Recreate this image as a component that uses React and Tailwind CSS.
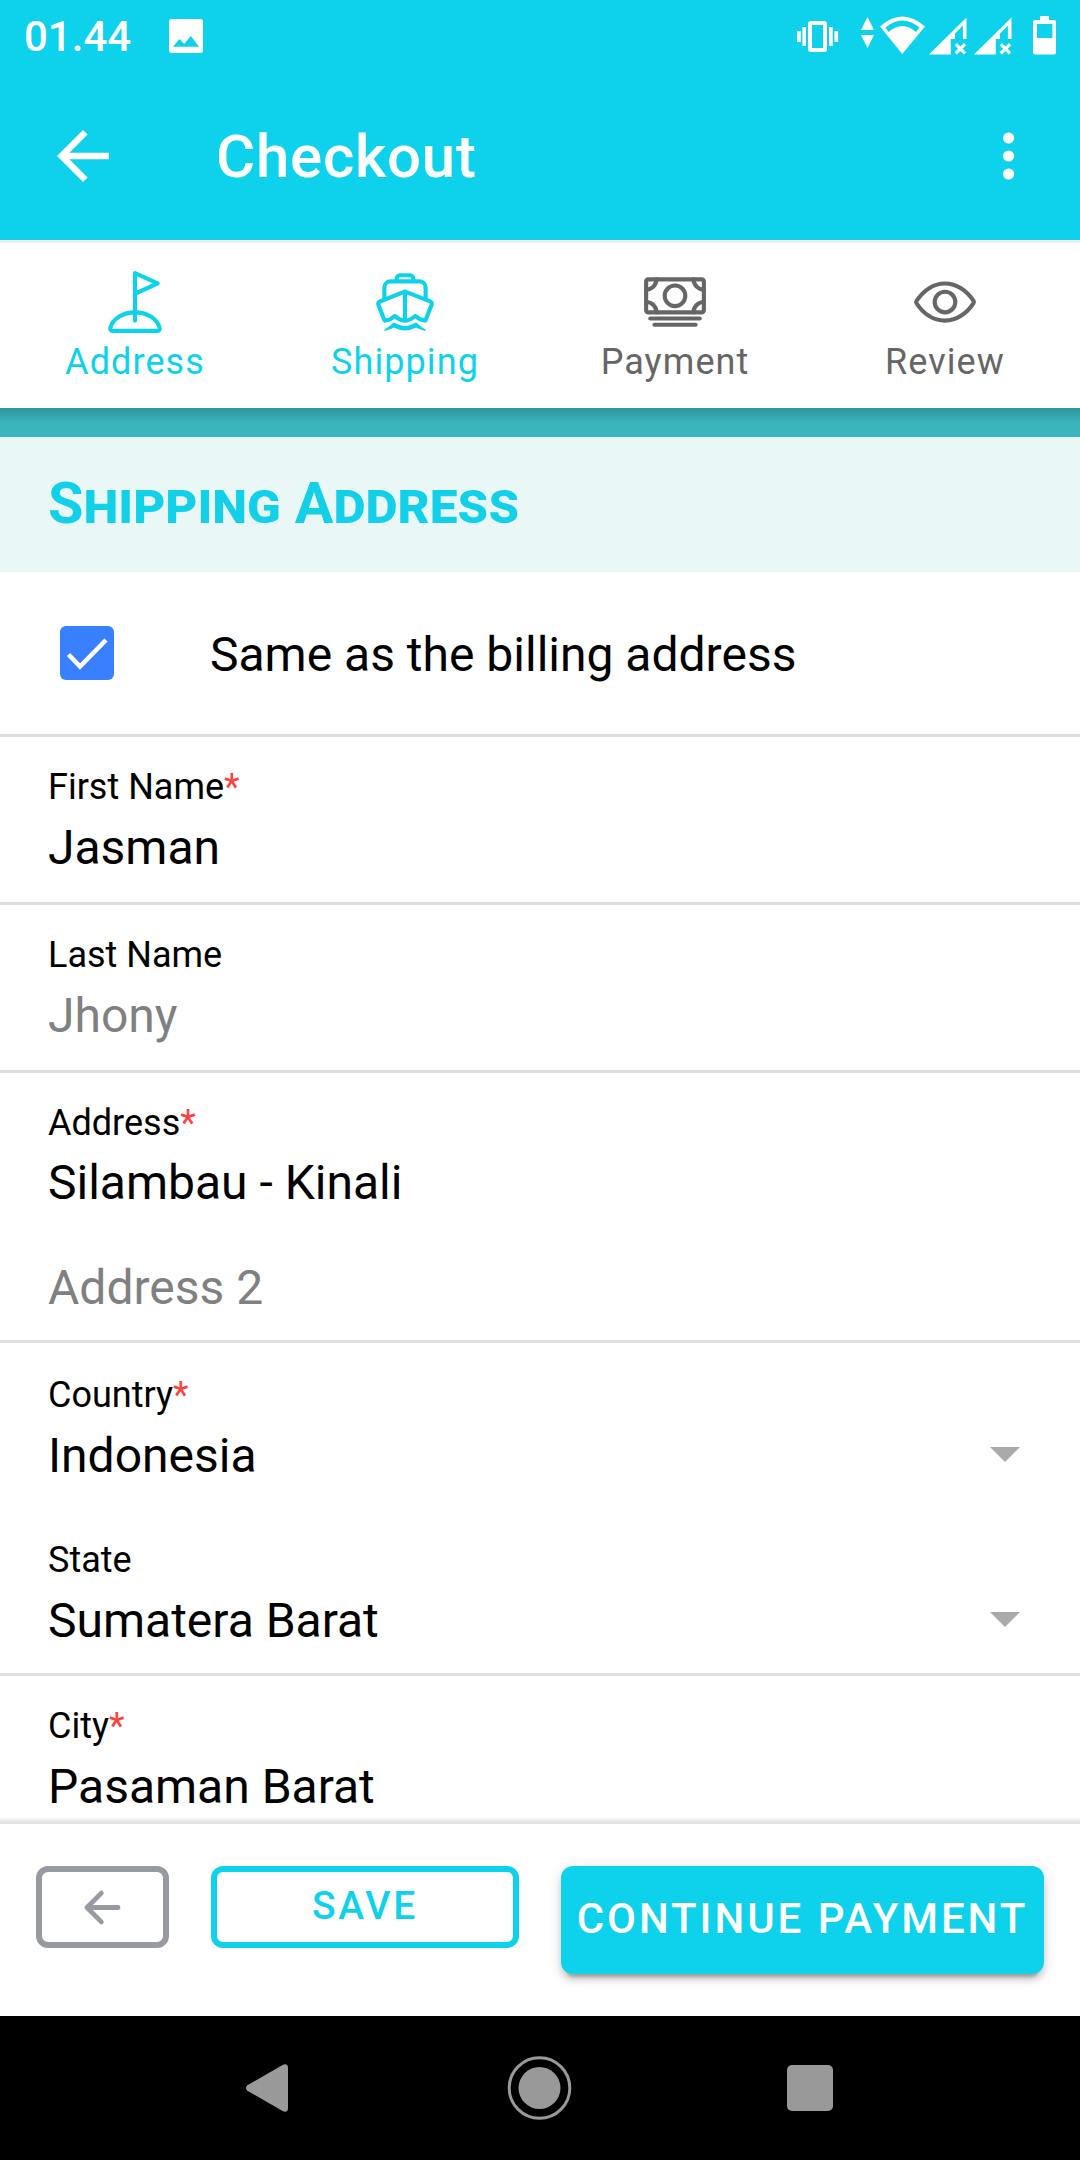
import React from "react";
import { IoGolfOutline, IoBoatOutline, IoCashOutline, IoEyeOutline, IoArrowBackOutline } from "react-icons/io5";
import { MdArrowBack } from "react-icons/md";

function ImageIcon() {
  return (
    <svg className="ml-[38px] h-[34px] w-[34px]" viewBox="169 19 34 34" fill="white">
      <path fillRule="evenodd" d="M172 19H200Q203 19 203 22V50Q203 53 200 53H172Q169 53 169 50V22Q169 19 172 19ZM173 46.8H199L190.8 36L184.2 44L179.4 39Z" />
    </svg>
  );
}

const signal = "M929 54.5L966.5 17.5V54.5ZM962.9 25.5V39H966.5V54.5H950.8V39H955V33.5Z";

function StatusIcons() {
  return (
    <svg className="ml-auto h-[40px] w-[260px]" viewBox="796 16 260 40" fill="white">
      <path d="M797 31h3.8v11H797zM802.4 27h3.6v19h-3.6zM829 27h3.7v19H829zM834.4 31h3.7v11h-3.7z" />
      <rect x="810" y="23" width="15" height="27" rx="1" fill="none" stroke="white" strokeWidth="4" />
      <path d="M867.5 17L874 30H861ZM861 35H874L867.5 48Z" />
      <path fillRule="evenodd" d="M880 26.5Q902.3 6.5 925 26.5L902.3 54ZM885.4 27.5L888.5 32Q902.3 20 916 32L919.5 27.5Q902.3 13.5 885.4 27.5Z" />
      <path fillRule="evenodd" d={signal} />
      <path d="M955.8 44.100l9.200 9.200M965 44.100l-9.200 9.200" stroke="white" strokeWidth="3.200" />
      <g transform="translate(45 0)">
        <path fillRule="evenodd" d={signal} />
        <path d="M955.8 44.100l9.200 9.200M965 44.100l-9.200 9.200" stroke="white" strokeWidth="3.200" />
      </g>
      <path fillRule="evenodd" d="M1040 16h9v4h5q2 0 2 2v30.500q0 2-2 2h-19q-2 0-2-2V22q0-2 2-2h5zM1037 24v14h15.400V24z" />
    </svg>
  );
}

function Tab({ icon: Icon, label, active }) {
  return (
    <div className={"flex flex-1 flex-col items-center pt-[26px] " + (active ? "text-[#0ed2eb]" : "text-[#666666]")}>
      <Icon className="h-[66px] w-[66px]" />
      <span className="mt-[5px] text-[36px] leading-[44px] tracking-[0.03em]">{label}</span>
    </div>
  );
}

function Label({ children, required }) {
  return (
    <div className="text-[36px] leading-[44px]">
      {children}
      {required && <span className="text-[#ff4141]">*</span>}
    </div>
  );
}

function Value({ children, muted }) {
  return <div className={"mt-[11px] text-[48px] leading-[56px] " + (muted ? "text-[#808080]" : "text-black")}>{children}</div>;
}

function Caret() {
  return (
    <svg className="mt-[7px] mr-[60px] h-[15px] w-[30px]" viewBox="0 0 30 15" fill="#aaaaaa">
      <path d="M0 0H30L15 15Z" />
    </svg>
  );
}

function Select({ label, required, children }) {
  return (
    <div>
      <Label required={required}>{label}</Label>
      <div className="flex items-center justify-between">
        <Value>{children}</Value>
        <Caret />
      </div>
    </div>
  );
}

const row = "border-b-[3px] border-[#dedede] pl-[48px]";

export default function App() {
  return (
    <div className="flex h-[2160px] w-[1080px] flex-col overflow-hidden bg-white font-[Roboto,sans-serif] text-black">
      <header className="h-[240px] shrink-0 bg-[#0ed2eb] text-white">
        <div className="flex h-[72px] items-center pr-[24px] pl-[24px]">
          <span className="pt-[2px] text-[42px] leading-[50px] font-medium">01.44</span>
          <ImageIcon />
          <StatusIcons />
        </div>
        <div className="flex h-[168px] items-center pl-[44px]">
          <MdArrowBack className="h-[78px] w-[78px]" />
          <h1 className="ml-[94px] pt-[2px] text-[60px] leading-[72px] font-medium tracking-[0.0125em]">Checkout</h1>
          <svg className="mr-[65px] ml-auto h-[48px] w-[12px]" viewBox="0 0 12 48" fill="white">
            <circle cx="5.600" cy="6" r="5.600" />
            <circle cx="5.600" cy="24" r="5.600" />
            <circle cx="5.600" cy="42" r="5.600" />
          </svg>
        </div>
      </header>

      <nav className="flex h-[168px] shrink-0 border-t-[3px] border-[#ededed] bg-white">
        <Tab icon={IoGolfOutline} label="Address" active />
        <Tab icon={IoBoatOutline} label="Shipping" active />
        <Tab icon={IoCashOutline} label="Payment" />
        <Tab icon={IoEyeOutline} label="Review" />
      </nav>
      <div className="h-[29px] shrink-0 bg-gradient-to-b from-[#2f9599] to-[#39b5bb] to-50%" />

      <main className="min-h-0 flex-1 overflow-hidden">
        <div className="flex h-[135px] items-center bg-[#e9f8f7] pb-[2px] pl-[48px]">
          <h2 className="text-[57.6px] leading-[68px] font-bold text-[#12d0e8] [font-variant:small-caps]">Shipping Address</h2>
        </div>
        <div className={row + " flex h-[165px] items-center"}>
          <div className="ml-[12px] flex h-[54px] w-[54px] items-center justify-center rounded-[6px] bg-[#3880ff]">
            <svg className="h-[54px] w-[54px]" viewBox="0 0 54 54" fill="none" stroke="white" strokeWidth="4.600">
              <path d="M8.500 28.500L20 40.500L46 14" />
            </svg>
          </div>
          <span className="ml-[96px] pt-[3px] text-[48px] leading-[56px]">Same as the billing address</span>
        </div>
        <div className={row + " h-[168px] pt-[28px]"}>
          <Label required>First Name</Label>
          <Value>Jasman</Value>
        </div>
        <div className={row + " h-[168px] pt-[28px]"}>
          <Label>Last Name</Label>
          <Value muted>Jhony</Value>
        </div>
        <div className={row + " flex h-[270px] flex-col pt-[28px]"}>
          <Label required>Address</Label>
          <div className="mt-[10px] text-[48px] leading-[56px]">Silambau - Kinali</div>
          <div className="mt-[49px] text-[48px] leading-[56px] text-[#808080]">Address 2</div>
        </div>
        <div className={row + " flex h-[333px] flex-col gap-[54px] pt-[30px]"}>
          <Select label="Country" required>Indonesia</Select>
          <Select label="State">Sumatera Barat</Select>
        </div>
        <div className="pt-[28px] pl-[48px]">
          <Label required>City</Label>
          <Value>Pasaman Barat</Value>
        </div>
      </main>

      <div className="h-[6px] shrink-0 bg-gradient-to-b from-[#f7f7f7] to-[#dddddd]" />
      <footer className="flex h-[192px] shrink-0 items-start pt-[42px] pl-[36px]">
        <button className="flex h-[82px] w-[133px] items-center justify-center rounded-[12px] border-[6px] border-[#989aa2] text-[#989aa2]">
          <IoArrowBackOutline className="h-[51px] w-[51px]" />
        </button>
        <button className="ml-[42px] flex h-[82px] w-[308px] items-center justify-center rounded-[12px] border-[6px] border-[#0ed2eb] pb-[2px] text-[39px] leading-[46px] font-medium tracking-[0.07em] text-[#0ed2eb]">
          SAVE
        </button>
        <button className="ml-[42px] flex h-[108px] w-[483px] items-center justify-center rounded-[12px] bg-[#0ed2eb] pb-[2px] text-[42px] leading-[50px] font-medium tracking-[0.07em] whitespace-nowrap text-white shadow-[0_9px_3px_-6px_rgba(0,0,0,0.2),0_6px_6px_0_rgba(0,0,0,0.14),0_3px_15px_0_rgba(0,0,0,0.12)]">
          CONTINUE PAYMENT
        </button>
      </footer>

      <div className="flex h-[144px] shrink-0 items-center bg-black pl-[246px]">
        <svg className="h-[48px] w-[42px]" viewBox="0 0 42 48" fill="#999999">
          <path d="M1 21.500L37 .7Q42-1 42 4V44Q42 49 37 47.300L1 26.500Q-1 24 1 21.500Z" />
        </svg>
        <svg className="ml-[218px] h-[66px] w-[67px]" viewBox="0 0 67 66" fill="#999999">
          <circle cx="33.500" cy="33" r="30.300" fill="none" stroke="#999999" strokeWidth="3" />
          <circle cx="33.500" cy="33" r="21" />
        </svg>
        <div className="ml-[214px] h-[46px] w-[46px] rounded-[5px] bg-[#999999]" />
      </div>
    </div>
  );
}
